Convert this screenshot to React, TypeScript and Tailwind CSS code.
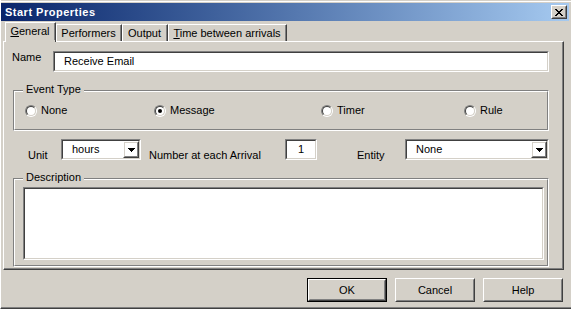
import React from 'react'

const font = "font-['Liberation_Sans',Arial,sans-serif]"

function Sunken({ className = '', children }: { className?: string; children?: React.ReactNode }) {
  return (
    <div className={`border border-t-[#808080] border-l-[#808080] border-b-white border-r-white ${className}`}>
      <div className="h-full w-full border border-t-[#404040] border-l-[#404040] border-b-[#d4d0c8] border-r-[#d4d0c8] bg-white flex items-center">
        {children}
      </div>
    </div>
  )
}

function Raised({ className = '', children }: { className?: string; children?: React.ReactNode }) {
  return (
    <div className={`border border-t-white border-l-white border-b-[#404040] border-r-[#404040] ${className}`}>
      <div className="h-full w-full border border-t-[#d4d0c8] border-l-[#d4d0c8] border-b-[#808080] border-r-[#808080] flex items-center justify-center">
        {children}
      </div>
    </div>
  )
}

function Arrow() {
  return (
    <svg width="7" height="4" viewBox="0 0 7 4" shapeRendering="crispEdges">
      <path d="M0 0h7v1H0zM1 1h5v1H1zM2 2h3v1H2zM3 3h1v1H3z" fill="#000" />
    </svg>
  )
}

function Combo({ width, value }: { width: string; value: string }) {
  return (
    <Sunken className={`${width} h-[21px]`}>
      <span className="flex-1 pl-[9px]">{value}</span>
      <Raised className="w-[16px] h-[17px]">
        <Arrow />
      </Raised>
    </Sunken>
  )
}

function Radio({ label, checked, width }: { label: string; checked?: boolean; width?: string }) {
  return (
    <div className={`flex items-center gap-[4px] ${width ?? ''}`}>
      <div className="w-[12px] h-[12px] rounded-full border border-t-[#808080] border-l-[#808080] border-b-white border-r-white">
        <div className="w-full h-full rounded-full border border-t-[#404040] border-l-[#404040] border-b-[#d4d0c8] border-r-[#d4d0c8] bg-white flex items-center justify-center">
          {checked && <div className="w-[4px] h-[4px] rounded-full bg-black" />}
        </div>
      </div>
      <span>{label}</span>
    </div>
  )
}

function Group({ legend, className = '', children }: { legend: string; className?: string; children?: React.ReactNode }) {
  return (
    <div className={`relative border border-t-[#808080] border-l-[#808080] border-b-white border-r-white ${className}`}>
      <div className="h-full w-full border border-t-white border-l-white border-b-[#808080] border-r-[#808080]">
        {children}
      </div>
      <span className="absolute left-[9px] top-[-8px] px-[3px] bg-[#d4d0c8]">{legend}</span>
    </div>
  )
}

function Tab({ children, width, active }: { children: React.ReactNode; width: string; active?: boolean }) {
  return (
    <div
      className={`${width} flex items-center justify-center border-t border-l border-t-white border-l-white border-r border-r-[#404040] bg-[#d4d0c8] ${
        active ? 'h-[20px] mb-[-1px] relative z-10 pb-[2px]' : 'h-[17px]'
      }`}
    >
      <div className="h-full w-full flex items-center justify-center border-r border-r-[#808080]">{children}</div>
    </div>
  )
}

function Button({ label, primary }: { label: string; primary?: boolean }) {
  if (primary) {
    return (
      <div className="w-[80px] h-[24px] border border-black">
        <Raised className="h-full w-full">{label}</Raised>
      </div>
    )
  }
  return <Raised className="w-[80px] h-[24px]">{label}</Raised>
}

export default function App() {
  return (
    <div
      className={`${font} text-[11px] leading-[13px] text-black w-[571px] h-[309px] bg-[#d4d0c8] border-l border-b border-l-white border-b-[#404040] overflow-hidden`}
    >
      <div className="h-full flex flex-col border-b border-b-[#808080] pt-[1px]">
        <div className="border-t border-t-white pt-[1px]">
          {/* Title bar */}
          <div className="mr-[2px] h-[18px] flex items-center pl-[4px] bg-linear-to-r from-[#0a246a] to-[#a6caf0]">
            <span className="text-white font-bold tracking-[0.5px]">Start Properties</span>
            <Raised className="ml-auto mr-[2px] w-[16px] h-[14px] bg-[#d4d0c8]">
              <svg width="8" height="7" viewBox="0 0 8 7" shapeRendering="crispEdges">
                <path
                  d="M0 0h2v1H0zM6 0h2v1H6zM1 1h2v1H1zM5 1h2v1H5zM2 2h4v1H2zM3 3h2v1H3zM2 4h4v1H2zM1 5h2v1H1zM5 5h2v1H5zM0 6h2v1H0zM6 6h2v1H6z"
                  fill="#000"
                />
              </svg>
            </Raised>
          </div>
        </div>

        {/* Tabs */}
        <div className="mt-[1px] h-[19px] flex items-end pl-[4px]">
          <Tab width="w-[51px]" active>
            <span>
              <span className="underline">G</span>eneral
            </span>
          </Tab>
          <Tab width="w-[66px]">Performers</Tab>
          <Tab width="w-[46px]">Output</Tab>
          <Tab width="w-[119px]">
            <span>
              <span className="underline">T</span>ime between arrivals
            </span>
          </Tab>
        </div>

        {/* Panel */}
        <div className="ml-[2px] w-[561px] h-[229px] border border-t-white border-l-white border-r-[#404040] border-b-[#404040]">
          <div className="h-full border-r border-b border-r-[#808080] border-b-[#808080] flex flex-col">
            <div className="mt-[9px] ml-[8px] flex items-start">
              <span className="w-[41px]">Name</span>
              <Sunken className="w-[496px] h-[21px]">
                <span className="pl-[9px]">Receive Email</span>
              </Sunken>
            </div>

            <Group legend="Event Type" className="mt-[18px] ml-[9px] w-[536px] h-[41px]">
              <div className="h-full flex items-center pl-[10px]">
                <Radio label="None" width="w-[129px]" />
                <Radio label="Message" checked width="w-[167px]" />
                <Radio label="Timer" width="w-[143px]" />
                <Radio label="Rule" />
              </div>
            </Group>

            <div className="mt-[8px] ml-[24px] flex items-start h-[21px]">
              <span className="w-[33px] pt-[10px]">Unit</span>
              <Combo width="w-[80px]" value="hours" />
              <span className="ml-[8px] w-[136px] pt-[10px]">Number at each Arrival</span>
              <Sunken className="w-[32px] h-[21px]">
                <span className="w-full text-center">1</span>
              </Sunken>
              <span className="ml-[40px] w-[48px] pt-[10px]">Entity</span>
              <Combo width="w-[144px]" value="None" />
            </div>

            <Group legend="Description" className="mt-[18px] ml-[9px] w-[536px] h-[89px]">
              <div className="pt-[7px] pl-[8px]">
                <Sunken className="w-[521px] h-[73px]" />
              </div>
            </Group>
          </div>
        </div>

        {/* Buttons */}
        <div className="mt-[8px] flex justify-end gap-[8px] pr-[8px]">
          <Button label="OK" primary />
          <Button label="Cancel" />
          <Button label="Help" />
        </div>
      </div>
    </div>
  )
}
